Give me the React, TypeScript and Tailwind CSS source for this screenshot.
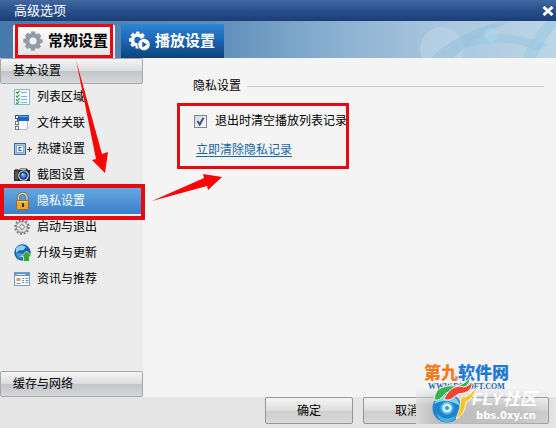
import { useState, type ReactNode } from 'react'

interface NavItem {
  label: string
  icon: ReactNode
}

function Gear({ className }: { className: string }) {
  return (
    <svg viewBox="0 0 20 20" className={className} fill="none" stroke="currentColor" aria-hidden="true">
      <circle cx="10" cy="10" r="5.8" strokeWidth="4.4" />
      <circle cx="10" cy="10" r="8.4" strokeWidth="2.6" strokeDasharray="4 2.6" strokeDashoffset="2" />
    </svg>
  )
}

function PlayGear() {
  return (
    <svg viewBox="0 0 22 20" className="h-5 w-[22px] text-white" fill="none" stroke="currentColor" aria-hidden="true">
      <circle cx="8.5" cy="9" r="5" strokeWidth="3.6" />
      <circle cx="8.5" cy="9" r="7.4" strokeWidth="2.2" strokeDasharray="3.6 2.21" strokeDashoffset="1.8" />
      <circle cx="15" cy="13.5" r="6.6" fill="#1a60ab" stroke="none" />
      <circle cx="15" cy="13.5" r="5.8" fill="white" stroke="none" />
      <path d="M13.3 10.4v6.2l4.6-3.1z" fill="#18599f" stroke="none" />
    </svg>
  )
}

const icon = 'h-[18px] w-[18px] shrink-0'

const items: NavItem[] = [
  {
    label: '列表区域',
    icon: (
      <svg viewBox="0 0 18 18" className={icon} fill="none">
        <rect x=".5" y="1.5" width="15" height="15" fill="#f6fbff" stroke="#8db8d3" />
        <path d="M2 4l1.2 1.4 2.3-2.6M2 7.7l1.2 1.4 2.3-2.6M2 11.4l1.2 1.4 2.3-2.6M2 14.6l1.2 1.2 2.3-2.4" stroke="#25943a" strokeWidth="1.1" />
        <path d="M7 4.5h6M7 8.5h6M7 11.5h6M7 14.5h6" stroke="#75b5dd" />
      </svg>
    ),
  },
  {
    label: '文件关联',
    icon: (
      <svg viewBox="0 0 18 18" className={icon} fill="none">
        <rect x="3" y="2" width="12" height="14" fill="#fbfbfb" />
        <path d="M3.5 6.5v9h10v-9" stroke="#b4b9be" />
        <rect x="3" y="1" width="12" height="6" fill="#1f67c2" />
        <path d="M4 2.5h10" stroke="#6aa8eb" />
        <rect x="1.5" y="1.5" width="3" height="3" fill="#eaf2fb" stroke="#33547e" />
        <rect x="1.5" y="7.5" width="3" height="3" fill="white" stroke="#6a7784" />
        <rect x="1.5" y="12.5" width="3" height="3" fill="white" stroke="#6a7784" />
      </svg>
    ),
  },
  {
    label: '热键设置',
    icon: (
      <svg viewBox="0 0 18 18" className={icon} fill="none">
        <rect x=".5" y="3.5" width="11" height="11" fill="#a9c8e6" stroke="#3b6797" />
        <rect x="2.5" y="5.5" width="7" height="7" fill="#edf6ff" stroke="#87acd1" />
        <path d="M7.5 7.5H5v3h2.5" stroke="#1f5590" />
        <path d="M13 9.5h5M15.5 7v5" stroke="#444" />
      </svg>
    ),
  },
  {
    label: '截图设置',
    icon: (
      <svg viewBox="0 0 18 18" className={icon} fill="none">
        <path d="M0 4h5l1-1.5h7L14 4h2v11H0z" fill="#282a30" />
        <path d="M1 5h3v9H1z" fill="#53565c" />
        <path d="M6 3.5h6" stroke="#aab0b8" />
        <circle cx="9.5" cy="9.5" r="5.3" fill="#d5dbe5" />
        <circle cx="9.5" cy="9.5" r="4.2" fill="#173f82" />
        <circle cx="9.5" cy="9.5" r="2.4" fill="#4c91dd" />
        <circle cx="8.5" cy="8.4" r="1" fill="#d0e9ff" />
        <rect x="1" y="3" width="3" height="1" fill="#bf4935" />
      </svg>
    ),
  },
  {
    label: '隐私设置',
    icon: (
      <svg viewBox="0 0 18 18" className={icon} fill="none">
        <path d="M4.5 9V5.5a4.2 4.2 0 0 1 8.4 0V9" stroke="#736a51" strokeWidth="2.8" />
        <path d="M4.5 9V5.5a4.2 4.2 0 0 1 8.4 0V9" stroke="#e3dbc0" strokeWidth="1.2" />
        <rect x="2.5" y="8.5" width="12" height="9" rx="1" fill="#e4a834" stroke="#a06b17" />
        <path d="M3.5 9.8h10" stroke="#ffe08c" />
        <path d="M8 11h2v4H8z" fill="#4b3311" />
      </svg>
    ),
  },
  {
    label: '启动与退出',
    icon: (
      <svg viewBox="0 0 18 18" className={icon} fill="none">
        <circle cx="8" cy="9" r="6.7" stroke="#757575" strokeWidth="2.2" strokeDasharray="1.9 1.608" />
        <circle cx="8" cy="9" r="5.5" fill="#e8e8e8" stroke="#8c8c8c" />
        <circle cx="8" cy="9" r="2.3" fill="#f6f6f6" stroke="#757575" />
        <path d="M8 4.5v1M8 12.5v1M3.5 9h1M11.5 9h1" stroke="#757575" />
      </svg>
    ),
  },
  {
    label: '升级与更新',
    icon: (
      <svg viewBox="0 0 18 18" className={icon} fill="none">
        <circle cx="8.5" cy="8.5" r="8.2" fill="#1761ae" />
        <path d="M2 4Q7-1 12 3q-3 5-6 3l-4 3z" fill="#8ccdf1" />
        <path d="M2 10q5-3 7 1l-2 4Q3 14 2 10z" fill="#4397d8" />
        <path d="M12.5 7l5.5 5.5h-2.500V17.500h-6v-5H7z" fill="#35a936" stroke="#e4f7dd" strokeWidth=".8" />
      </svg>
    ),
  },
  {
    label: '资讯与推荐',
    icon: (
      <svg viewBox="0 0 18 18" className={icon} fill="none">
        <rect x=".5" y="2.5" width="15" height="13" fill="white" stroke="#789bc2" />
        <path d="M1 3h14v3H1z" fill="#5c91ce" />
        <path d="M2.5 4.5h9" stroke="#d8e8fa" />
        <path d="M2.5 8h4v3h-4z" fill="#df9b62" />
        <path d="M8 8.5h2M11.5 8.5h3M8 10.5h2M11.5 10.5h3M8 12.5h2M11.5 12.5h3M2.5 13.5h4" stroke="#6d96bf" />
      </svg>
    ),
  },
]

const groupHeader =
  'flex h-[26px] w-full shrink-0 items-center rounded-xs border border-[#a5a8ab] bg-[linear-gradient(#f5f5f5,#dcdddf_48%,#c3c5c8_52%,#d4d6d8)] px-3 text-left'

const dialogButton =
  'h-[27px] w-[88px] rounded-xs border border-[#969696] bg-[linear-gradient(#f5f5f5,#dedede_48%,#cfcfcf_55%,#d8d8d8)] text-xs text-black'

function TitleBar() {
  return (
    <header className="flex h-[21px] items-center justify-between bg-[linear-gradient(#41699f,#28508d_50%,#1c3d75)] pr-[2px] pl-[14px] text-white">
      <h1 className="text-[13px] leading-5">高级选项</h1>
      <button type="button" aria-label="关闭" className="flex h-4 w-3 items-center">
        <svg viewBox="0 0 12 10" className="h-[10px] w-3" stroke="white" strokeWidth="3">
          <path d="M1.5 1l9 8M10.5 1l-9 8" />
        </svg>
      </button>
    </header>
  )
}

function TabBar() {
  return (
    <nav className="relative flex h-[37px] items-end gap-[6px] bg-[linear-gradient(90deg,#4779ad,#5c8db9_38%,#86adcf_58%,#a7c5de_78%,#bdd6e6)] pl-[13px]">
      {/* faint film-reel pattern behind the right half */}
      <svg viewBox="0 0 156 37" className="absolute top-0 right-0 h-[37px] w-[156px]" fill="none" aria-hidden="true">
        <circle cx="42" cy="28" r="22" fill="#bdd6e6" fillOpacity=".6" />
        <path d="M31 37Q56 12 99 1h10Q72 17 54 37z" fill="#8fbddb" fillOpacity=".45" />
        <path d="M67 18Q98 6 147 23l-8 7Q104 15 65 27z" fill="#94c4de" fillOpacity=".45" />
        <path d="M147 0h9v5q-16 20-20 32h-13q6-19 24-37z" fill="#93c8e2" fillOpacity=".5" />
        <circle cx="91" cy="14" r="7" fill="#a9daec" fillOpacity=".6" />
      </svg>
      <button
        type="button"
        className="relative flex h-[34px] w-[102px] items-center gap-[5px] rounded-t-sm bg-[linear-gradient(#ffffff,#e2e2e2)] pl-[10px] text-[15px] font-bold whitespace-nowrap text-black"
      >
        <Gear className="h-5 w-5 shrink-0 text-[#929ca5]" />
        常规设置
        <span className="pointer-events-none absolute inset-x-[2px] top-0 bottom-0 border-3 border-[#e60a10]" />
      </button>
      <button
        type="button"
        className="relative flex h-[34px] w-[103px] items-center gap-1 bg-[linear-gradient(#2d86d6,#1a60ab_55%,#0e4377)] pl-2 text-[15px] font-bold whitespace-nowrap text-white"
      >
        <PlayGear />
        播放设置
      </button>
    </nav>
  )
}

function Sidebar() {
  const [active, setActive] = useState('隐私设置')
  return (
    <aside className="relative flex w-[143px] shrink-0 flex-col bg-[#ececec]">
      <button type="button" className={groupHeader}>
        基本设置
      </button>
      <ul className="flex-1">
        {items.map((item) => (
          <li key={item.label} className="relative">
            <button
              type="button"
              onClick={() => setActive(item.label)}
              className={`flex h-[26px] w-full items-center gap-[5px] pl-[14px] text-left ${
                active === item.label ? 'bg-[linear-gradient(#65a8e2,#3b80c8)] text-white' : 'text-black'
              }`}
            >
              {item.icon}
              {item.label}
            </button>
            {item.label === '隐私设置' && (
              <span className="pointer-events-none absolute -top-1 -right-[2px] -bottom-[6px] left-0 z-10 border-4 border-[#e60a10]" />
            )}
          </li>
        ))}
      </ul>
      <button type="button" className={groupHeader}>
        缓存与网络
      </button>
      <svg viewBox="0 0 228 150" className="pointer-events-none absolute top-0 left-0 z-20 h-[150px] w-[228px]" fill="#fa0505" aria-hidden="true">
        <path d="M76 2l26 94 6-2-3 21-13-13 4-1z" />
        <path d="M152 143l52-23-1-4 19 3-14 13-1-4z" />
      </svg>
    </aside>
  )
}

function PrivacyPanel() {
  const [clearOnExit, setClearOnExit] = useState(true)
  return (
    <section className="flex-1 pt-[18px] pr-3 pl-[34px]">
      <fieldset className="w-full">
        <legend className="flex h-5 w-full items-center pl-4">
          <span className="shrink-0">隐私设置</span>
          <span className="ml-[6px] h-px flex-1 bg-[#c4cacb]" />
        </legend>
        <div className="mt-[7px] flex h-[66px] w-[172px] flex-col gap-[9px] overflow-hidden border-3 border-[#e60a10] pt-[5px] pl-[14px]">
          <label className="flex h-5 items-center gap-2 whitespace-nowrap">
            <span className="relative h-[13px] w-[13px] shrink-0">
              <input
                type="checkbox"
                checked={clearOnExit}
                onChange={(e) => setClearOnExit(e.target.checked)}
                className="block h-[13px] w-[13px] appearance-none border border-[#7d8794] bg-[linear-gradient(135deg,#cfd5df,#ffffff)]"
              />
              {clearOnExit && (
                <svg viewBox="0 0 13 13" className="pointer-events-none absolute inset-0" fill="none" stroke="#3e5286" strokeWidth="2">
                  <path d="M3.5 6l2.2 3.5L9.5 2.8" />
                </svg>
              )}
            </span>
            退出时清空播放列表记录
          </label>
          <a href="#clear" className="ml-[2px] h-5 leading-5 text-[#1466a5] underline underline-offset-2">
            立即清除隐私记录
          </a>
        </div>
      </fieldset>
    </section>
  )
}

function Watermark() {
  return (
    <div className="pointer-events-none absolute right-0 bottom-0 h-[62px] w-[140px]">
      {/* hazy backdrop that fades out at its top and right */}
      <div className="absolute right-0 bottom-1 h-9 w-full bg-[linear-gradient(90deg,#d8d8d8,#bcbcbc_15%,#bcbcbcaa_75%,#d0d0d000)] mask-[linear-gradient(transparent,black_50%)]" />
      <p className="absolute top-0 left-2 text-[17px] leading-4 font-black whitespace-nowrap text-[#1f7ad6]">
        <span className="text-[#f5781d]">第九</span>软件网
      </p>
      <p className="absolute top-4 left-3 font-['Liberation_Serif',serif] text-[8px] leading-[10px] font-bold text-[#2464b4]">WWW.D9SOFT.COM</p>
      <svg viewBox="0 0 50 54" className="absolute top-1 left-4 h-[54px] w-[50px]" fill="none" aria-hidden="true">
        <circle cx="15" cy="38" r="14.5" fill="#1c84cc" />
        <path d="M2 34Q7 23 18 25q9 3 10 11Q14 27 2 34z" fill="#7fd0ed" />
        <path d="M4 43q8 9 20 3-3 6-9 6-8 0-11-9z" fill="#45b6e4" />
        <circle cx="15" cy="38" r="5.5" fill="#d7f1fb" stroke="#58b9e3" strokeWidth="2" />
        <circle cx="15" cy="38" r="2" fill="#2f9bd8" />
        <path d="M2 30Q3 19 11 17q6-2 12-1 10-1 16-10-2 13-14 16-9-2-13 3-4 6-10 5z" fill="#36b34a" stroke="#f0faf0" />
        <path d="M12 29q4-9 11-12 5-2 9 0 6-1 8-6 1 10-8 12-6 0-10 4-5 5-10 2z" fill="#ea4638" stroke="#fff0eb" />
        <path d="M29 27q7 1 15-9-1 9-10 14-1 13-10 17 5-10 5-22z" fill="#f8c331" stroke="#fff4cc" />
      </svg>
      <p className="absolute top-[26px] left-14 text-[17px] leading-4 font-bold whitespace-nowrap text-white italic">FLY社区</p>
      <p className="absolute top-[42px] left-[60px] font-['DejaVu_Sans',sans-serif] text-[10px] leading-4 font-bold text-white">bbs.0xy.cn</p>
    </div>
  )
}

export default function App() {
  return (
    <div className="relative flex min-h-screen flex-col overflow-hidden bg-[#f4f4f4] font-['Liberation_Sans','Noto_Sans_CJK_SC',sans-serif] text-xs text-black">
      <TitleBar />
      <TabBar />
      <main className="flex flex-1">
        <Sidebar />
        <PrivacyPanel />
      </main>
      <footer className="flex h-[31px] items-start justify-end gap-[10px] bg-[#e5e5e5] pr-[7px]">
        <button type="button" className={dialogButton}>
          确定
        </button>
        <button type="button" className={dialogButton}>
          取消
        </button>
        <button type="button" aria-label="应用" className={dialogButton} />
      </footer>
      <Watermark />
    </div>
  )
}
